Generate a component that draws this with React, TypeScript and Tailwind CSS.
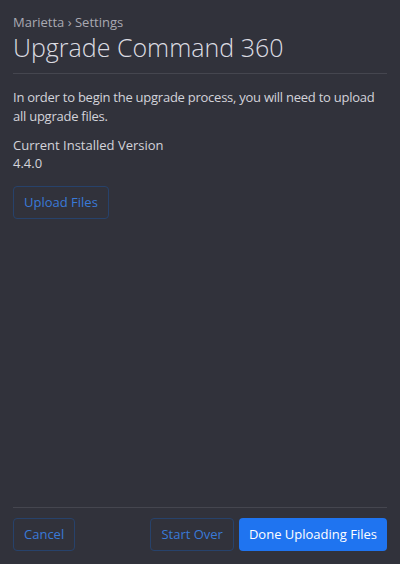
const App = () => {
  return (
    <div
      className="flex flex-col h-[564px] w-[400px] bg-[#31323b] px-[13px] text-[#d3d3da]"
      style={{ fontFamily: "'Open Sans', sans-serif" }}
    >
      <div className="pt-[14px] text-[13px] text-[#a9a9b2] leading-[16px]">Marietta › Settings</div>
      <h1 className="mt-[2px] text-[25px] font-light leading-[31px] text-[#dcdce2]">Upgrade Command 360</h1>
      <div className="mt-[10px] h-px bg-[#45464f]" />
      <p className="mt-[14px] text-[13px] leading-[19px] tracking-[-0.25px]">
        In order to begin the upgrade process, you will need to upload all upgrade files.
      </p>
      <div className="mt-[10px] text-[13px] leading-[18px]">
        <div>Current Installed Version</div>
        <div>4.4.0</div>
      </div>
      <div className="mt-[14px]">
        <button className="h-[33px] px-[10px] rounded border border-[#27426b] text-[13px] text-[#3a7ad8]">
          Upload Files
        </button>
      </div>
      <div className="flex-1" />
      <div className="h-px bg-[#45464f]" />
      <div className="flex items-center gap-[5px] pt-[10px] pb-[13px]">
        <button className="h-[33px] px-[10px] rounded border border-[#27426b] text-[13px] text-[#3a7ad8]">
          Cancel
        </button>
        <div className="flex-1" />
        <button className="h-[33px] px-[10px] rounded border border-[#27426b] text-[13px] text-[#3a7ad8]">
          Start Over
        </button>
        <button className="h-[33px] px-[10px] rounded bg-[#1f74f0] text-[13px] text-white">
          Done Uploading Files
        </button>
      </div>
    </div>
  );
};
export default App;
